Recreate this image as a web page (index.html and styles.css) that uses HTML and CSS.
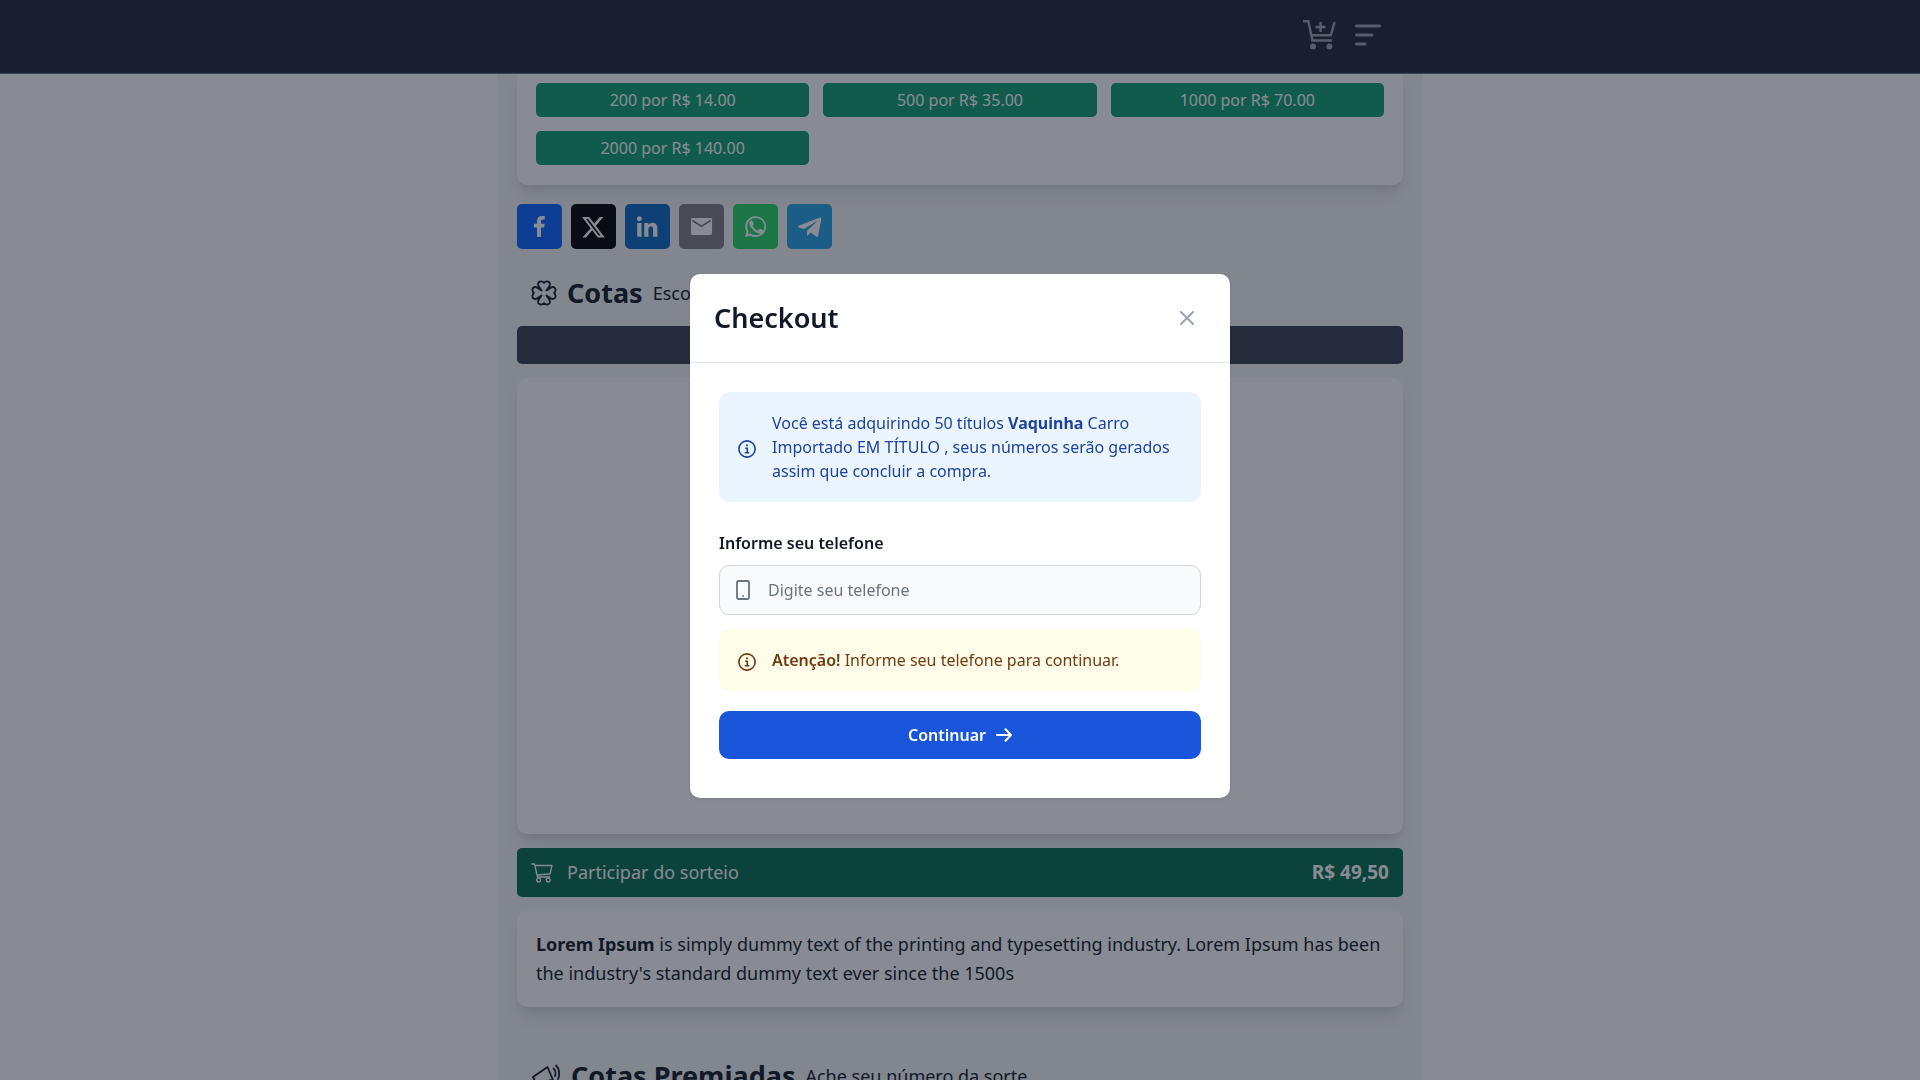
FILE: index.html
```html
<!DOCTYPE html>
<html lang="pt-BR">
<head>
    <meta charset="UTF-8">
    <meta name="viewport" content="width=device-width, initial-scale=1.0">
    <title>Checkout</title>

    <link rel="stylesheet" href="styles.css">
</head>
<body>

    <header class="navbar">
        <nav class="navbar-inner">
            <a class="nav-icon" href="#carrinho" aria-label="Carrinho">
                <svg class="nav-cart" viewBox="0 0 34 32" fill="none" stroke="currentColor" stroke-width="2.4">
                    <path d="M1 2.200h5.400l4 19.300h19.400M9.200 16.200h19.600L32.600 3.200M18.600 3v10M13.600 8h10"/>
                    <circle cx="11" cy="27.600" r="3" fill="currentColor" stroke="none"/>
                    <circle cx="27.400" cy="27.600" r="3" fill="currentColor" stroke="none"/>
                </svg>
            </a>
            <button class="nav-icon" type="button" aria-label="Menu">
                <svg class="nav-menu" viewBox="0 0 26 22" fill="none" stroke="currentColor" stroke-width="3" stroke-linecap="round">
                    <path d="M1.500 2h23M1.500 11h15.500M1.500 20h8.500"/>
                </svg>
            </button>
        </nav>
    </header>

    <main class="container">
        <!-- Pacotes -->
        <section class="card packages">
            <button type="button">200 por R$ 14.00</button>
            <button type="button">500 por R$ 35.00</button>
            <button type="button">1000 por R$ 70.00</button>
            <button type="button">2000 por R$ 140.00</button>
        </section>

        <!-- Compartilhar -->
        <div class="share">
            <a class="facebook" href="#facebook" aria-label="Facebook">
                <svg viewBox="0 0 64 64"><path d="M34.100 47V33.300h4.600l.7-5.300h-5.300v-3.400c0-1.500.4-2.600 2.600-2.600h2.800v-4.800c-.5-.1-2.200-.2-4.100-.2-4.100 0-6.900 2.500-6.900 7V28H24v5.300h4.500V47h5.600z"/></svg>
            </a>
            <a class="twitter" href="#x" aria-label="X">
                <svg viewBox="0 0 64 64"><path d="M41.116 18.375h4.962l-10.840 12.390 12.753 16.860H38.005l-7.821-10.225L21.235 47.625H16.270l11.595-13.252L15.631 18.375H25.870l7.069 9.347zm-1.741 26.280h2.750L24.376 21.189h-2.951z"/></svg>
            </a>
            <a class="linkedin" href="#linkedin" aria-label="LinkedIn">
                <svg viewBox="0 0 64 64"><path d="M17.400 46.500h6.100V27h-6.100v19.500zm3-22c1.900 0 3.500-1.600 3.500-3.500s-1.600-3.500-3.500-3.500-3.500 1.600-3.500 3.500 1.600 3.500 3.500 3.500zm12.900 11.200c0-2.600 1.200-4.200 3.600-4.200 2.100 0 3.100 1.500 3.100 4.200v10.800h6.100V34.200c0-5.300-2.900-7.700-7-7.700s-5.800 3.100-5.800 3.100V27h-5.900v19.500h5.900V35.700z"/></svg>
            </a>
            <a class="email" href="#email" aria-label="E-mail">
                <svg viewBox="0 0 64 64"><rect x="17" y="20" width="30" height="24" rx="2"/><path d="M19 23.500l13 8 13-8" fill="none" stroke="#7f7f7f" stroke-width="2.400"/></svg>
            </a>
            <a class="whatsapp" href="#whatsapp" aria-label="WhatsApp">
                <svg viewBox="0 0 64 64"><path d="M17 47l2.200-7.700A14.800 14.800 0 1 1 24.800 45L17 47zm4.100-4l4.200-1.100.6.400A12.200 12.200 0 1 0 21.800 38l.5.700-1.200 4.300z" fill-rule="evenodd"/><path d="M27.300 24.300c-.4-.8-.7-.8-1.200-.8-.6 0-2.700.7-2.700 3.700s2 5.700 2.400 6.100c.3.400 4 6.200 9.700 8.300 4.600 1.800 7.500-.9 7.500-3.700 0-.6-.3-.9-.8-1.100l-3.400-1.600c-.5-.2-.9-.2-1.200.3l-1.500 1.900c-.3.400-.7.400-1.200.2-3.600-1.600-5.200-3.200-7-6.100-.2-.5 0-.7.300-1l1.200-1.600c.3-.4.2-.7 0-1.100l-2.100-3.500z"/></svg>
            </a>
            <a class="telegram" href="#telegram" aria-label="Telegram">
                <svg viewBox="0 0 64 64"><path d="M45.900 19.400L16.600 30.900c-1.500.6-1.500 2 .1 2.500l7.400 2.300L41 25.200c.9-.5 1.600-.2 1 .4L28.500 38v7c.8 0 1.200-.4 1.600-.8l3.700-3.500 7.600 5.600c1.400.8 2.400.4 2.800-1.300l4.600-23.500c.5-1.900-.8-2.800-2.900-2.100z"/></svg>
            </a>
        </div>

        <!-- Cotas -->
        <section class="cotas">
            <h2 class="section-title">
                <svg class="title-icon" viewBox="0 0 26 26" fill="none" stroke="currentColor" stroke-width="1.800" stroke-linejoin="round">
                    <path d="M10.500 10.500C9.500 8.500 7 6.500 7 4.300 7 1.500 10.500.3 13 2.800 15.500.3 19 1.500 19 4.300 19 6.500 16.500 8.500 15.500 10.500 17.500 9.500 19.500 7 21.700 7 24.500 7 25.700 10.500 23.200 13 25.700 15.500 24.500 19 21.700 19 19.500 19 17.500 16.500 15.500 15.500 16.500 17.500 19 19.500 19 21.700 19 24.500 15.500 25.700 13 23.200 10.500 25.700 7 24.500 7 21.700 7 19.500 9.500 17.500 10.500 15.500 8.500 16.500 6.500 19 4.300 19 1.500 19 .3 15.500 2.800 13 .3 10.500 1.500 7 4.300 7 6.500 7 8.500 9.500 10.500 10.500z"/>
                </svg>
                Cotas <small>Escolha sua cota</small>
            </h2>
            <div class="cotas-bar"></div>
            <div class="card cotas-list"></div>
        </section>

        <button class="participate" type="button">
            <svg viewBox="0 0 22 20" fill="none" stroke="currentColor" stroke-width="1.300" stroke-linejoin="round" stroke-linecap="round">
                <path d="M.7 1h2.800l3 13h12.200M3.900 2.500H21l-2 8.500-13 1"/>
                <circle cx="7.600" cy="17" r="1.900"/>
                <circle cx="17.200" cy="17" r="1.900"/>
            </svg>
            <span>Participar do sorteio</span>
            <strong>R$ 49,50</strong>
        </button>

        <section class="card description">
            <p><strong>Lorem Ipsum</strong> is simply dummy text of the printing and typesetting industry. Lorem Ipsum has been the industry's standard dummy text ever since the 1500s</p>
        </section>

        <section class="premiadas">
            <h2 class="section-title">
                <svg class="title-icon megaphone" viewBox="0 0 30 26" fill="none" stroke="currentColor" stroke-width="1.800" stroke-linejoin="round" stroke-linecap="round">
                    <path d="M16.500 4L2 14l3 6 17-3zM7 20l1.500 5h4l-1-5.500M22.500 5.500c2 1.500 2.500 5 1.500 7.500M25 2.500c3.500 3 4 9.500 2 13.500"/>
                </svg>
                Cotas Premiadas <small>Ache seu número da sorte</small>
            </h2>
        </section>
    </main>

    <!-- Modal de checkout -->
    <div class="overlay">
        <div class="modal" role="dialog" aria-modal="true" aria-labelledby="modal-title">
            <div class="modal-header">
                <h3 id="modal-title">Checkout</h3>
                <button class="close" type="button" aria-label="Fechar">
                    <svg viewBox="0 0 14 14" fill="none" stroke="currentColor" stroke-width="2" stroke-linecap="round"><path d="M1 1l12 12M13 1L1 13"/></svg>
                </button>
            </div>
            <form class="modal-body">
                <div class="alert alert-info">
                    <svg viewBox="0 0 20 20" fill="none" stroke="currentColor" stroke-width="1.800"><circle cx="10" cy="10" r="9"/><path d="M8 9.200h2.300V14M7.500 14.200h5"/><path d="M9 5.900h2" stroke-width="2"/></svg>
                    <p>Você está adquirindo 50 títulos <strong>Vaquinha</strong> Carro Importado EM TÍTULO , seus números serão gerados assim que concluir a compra.</p>
                </div>

                <label for="telefone">Informe seu telefone</label>
                <div class="field">
                    <svg viewBox="0 0 14 20" fill="none" stroke="currentColor" stroke-width="1.800"><rect x="1" y="1" width="12" height="18" rx="1.500"/><path d="M6.300 16h1.400"/></svg>
                    <input type="tel" id="telefone" placeholder="Digite seu telefone">
                </div>

                <div class="alert alert-warning">
                    <svg viewBox="0 0 20 20" fill="none" stroke="currentColor" stroke-width="1.800"><circle cx="10" cy="10" r="9"/><path d="M8 9.200h2.300V14M7.500 14.200h5"/><path d="M9 5.900h2" stroke-width="2"/></svg>
                    <p><strong>Atenção!</strong> Informe seu telefone para continuar.</p>
                </div>

                <button class="continue" type="submit">
                    Continuar
                    <svg viewBox="0 0 16 14" fill="none" stroke="currentColor" stroke-width="2" stroke-linecap="round" stroke-linejoin="round"><path d="M1 7h14M9.500 1.300L15 7l-5.500 5.700"/></svg>
                </button>
            </form>
        </div>
    </div>

</body>
</html>
```
FILE: styles.css
```css
* {
    box-sizing: border-box;
}

body {
    margin: 0;
    overflow: hidden;
    color: #111827;
    background-color: #ffffff;
    font-family: "Segoe UI", "Noto Sans", sans-serif;
    font-size: 18px;
    line-height: 29px;
}

h2, h3, p {
    margin: 0;
}

button, input {
    font: inherit;
}

button {
    border: 0;
    cursor: pointer;
}

svg {
    display: block;
    flex-shrink: 0;
}

/* Navbar */
.navbar {
    background-color: #1f2937;
    border-bottom: 1px solid #6b7280;
}

.navbar-inner {
    display: flex;
    align-items: center;
    justify-content: flex-end;
    gap: 19px;
    max-width: 926px;
    height: 73px;
    margin: 0 auto;
    padding: 0 42px 4px;
}

.nav-icon {
    padding: 0;
    color: #9ca3af;
    background: none;
}

.nav-cart {
    width: 34px;
    height: 32px;
}

.nav-menu {
    width: 26px;
    height: 22px;
}

/* Page column */
.container {
    max-width: 926px;
    margin: 0 auto;
    padding: 0 20px;
    background-color: #f3f4f6;
}

.card {
    background-color: #ffffff;
    border-radius: 10px;
    box-shadow: 0 12px 18px -4px rgba(0, 0, 0, 0.1), 0 5px 7px -2px rgba(0, 0, 0, 0.05);
}

.packages {
    display: grid;
    grid-template-columns: repeat(3, 1fr);
    gap: 14px;
    padding: 9px 19px 20px;
    border-radius: 0 0 10px 10px;
}

.packages button {
    height: 34px;
    padding: 0;
    color: #ffffff;
    background-color: #0e9f6e;
    border-radius: 5px;
    font-size: 16px;
    line-height: 24px;
}

/* Share buttons */
.share {
    display: flex;
    gap: 9px;
    margin-top: 19px;
}

.share a {
    border-radius: 5px;
    overflow: hidden;
}

.share svg {
    width: 45px;
    height: 45px;
    fill: #ffffff;
}

.facebook { background-color: #0965fe; }
.twitter { background-color: #000000; }
.linkedin { background-color: #0a66c2; }
.email { background-color: #7f7f7f; }
.whatsapp { background-color: #25d366; }
.telegram { background-color: #25a3e3; }

/* Section titles */
.section-title {
    display: flex;
    align-items: center;
    gap: 10px;
    padding: 0 14px;
    font-size: 27px;
    line-height: 38px;
}

.section-title small {
    font-size: 18px;
    font-weight: 400;
}

.title-icon {
    width: 26px;
    height: 26px;
}

.title-icon.megaphone {
    width: 30px;
}

.cotas {
    margin-top: 25px;
}

.cotas-bar {
    height: 38px;
    margin-top: 14px;
    background-color: #374151;
    border-radius: 5px;
}

.cotas-list {
    min-height: 456px;
    margin-top: 14px;
}

.participate {
    display: flex;
    align-items: center;
    gap: 14px;
    width: 100%;
    height: 49px;
    margin-top: 14px;
    padding: 0 14px;
    color: #ffffff;
    background-color: #046c4e;
    border-radius: 5px;
}

.participate svg {
    width: 22px;
    height: 20px;
}

.participate strong {
    margin-left: auto;
    font-size: 19px;
}

.description {
    margin-top: 14px;
    padding: 19px;
}

.premiadas {
    margin-top: 50px;
}

/* Checkout modal */
.overlay {
    position: fixed;
    inset: 0;
    display: flex;
    align-items: center;
    justify-content: center;
    padding-bottom: 8px;
    background-color: rgba(17, 24, 39, 0.5);
}

.modal {
    width: 100%;
    max-width: 540px;
    background-color: #ffffff;
    border-radius: 10px;
    box-shadow: 0 1px 3px rgba(0, 0, 0, 0.1);
    font-size: 16px;
    line-height: 24px;
}

.modal-header {
    display: flex;
    align-items: center;
    justify-content: space-between;
    padding: 24px;
    border-bottom: 1px solid #e5e7eb;
}

.modal-header h3 {
    font-size: 27px;
    font-weight: 600;
    line-height: 40px;
}

.close {
    padding: 12px;
    color: #9ca3af;
    background: none;
}

.close svg {
    width: 14px;
    height: 14px;
}

.modal-body {
    padding: 29px 29px 39px;
}

.alert {
    display: flex;
    align-items: center;
    gap: 16px;
    padding: 19px;
    border-radius: 10px;
}

.alert svg {
    width: 18px;
    height: 18px;
    margin-top: 3px;
}

.alert-info {
    color: #1e429f;
    background-color: #ebf5ff;
}

.alert-warning {
    margin-top: 14px;
    color: #723b13;
    background-color: #fdfdea;
}

.alert-warning strong {
    font-weight: 600;
}

.modal-body label {
    display: block;
    margin: 29px 0 10px;
    font-weight: 600;
}

.field {
    display: flex;
    align-items: center;
    gap: 18px;
    height: 50px;
    padding: 0 16px;
    color: #6b7280;
    background-color: #f9fafb;
    border: 1px solid #d1d5db;
    border-radius: 10px;
}

.field svg {
    width: 14px;
    height: 20px;
}

.field input {
    flex: 1;
    min-width: 0;
    padding: 0;
    color: #111827;
    background: none;
    border: 0;
    outline: 0;
}

.field input::placeholder {
    color: #6b7280;
    opacity: 1;
}

.continue {
    display: flex;
    align-items: center;
    justify-content: center;
    gap: 10px;
    width: 100%;
    height: 48px;
    margin-top: 20px;
    color: #ffffff;
    background-color: #1a56db;
    border-radius: 10px;
    font-weight: 600;
}

.continue svg {
    width: 16px;
    height: 14px;
}
```
